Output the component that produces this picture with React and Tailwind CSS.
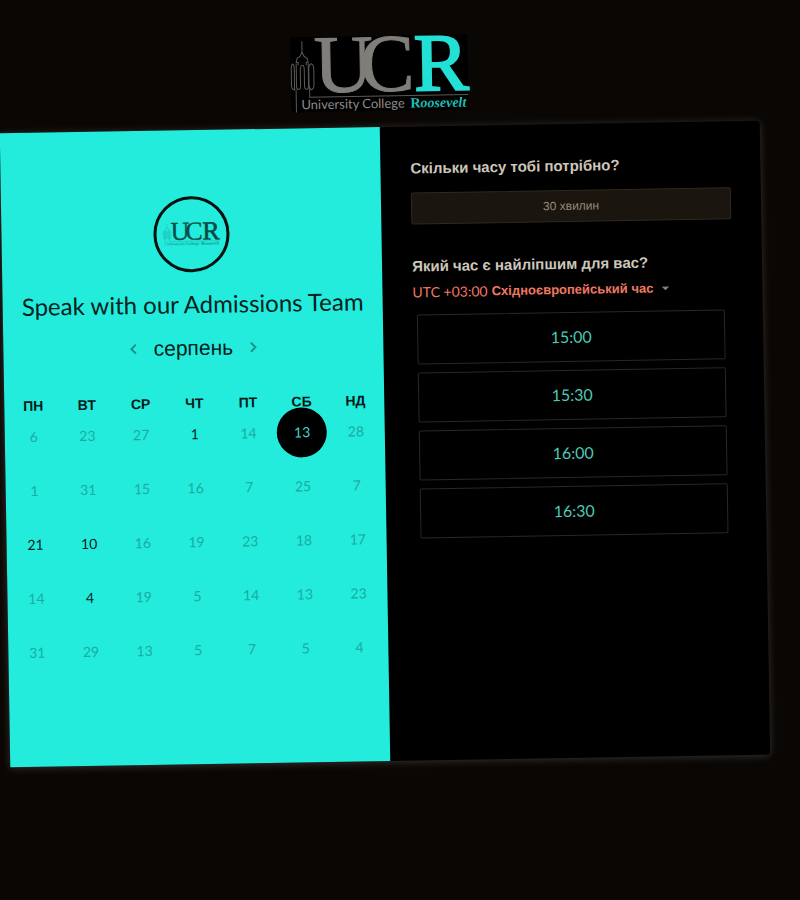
import React, { useState } from "react";

const WEEKDAYS = ["ПН", "ВТ", "СР", "ЧТ", "ПТ", "СБ", "НД"];

const WEEKS = [
  [6, 23, 27, 1, 14, 13, 28],
  [1, 31, 15, 16, 7, 25, 7],
  [21, 10, 16, 19, 23, 18, 17],
  [14, 4, 19, 5, 14, 13, 23],
  [31, 29, 13, 5, 7, 5, 4],
];

// "row-column" keys of the days that can be booked
const OPEN_DAYS = ["0-3", "0-5", "2-0", "2-1", "3-1"];

const SLOTS = ["15:00", "15:30", "16:00", "16:30"];

function Logo({ className, main, accent, line, caption, name }) {
  return (
    <svg viewBox="0 0 177 75" className={`overflow-visible ${className}`} role="img" aria-label="University College Roosevelt">
      <g fill="none" stroke={line} strokeWidth="1">
        <path d="M11.5 4v11M11.5 15l-2 4-3 2-1 4h2v3M11.500 15l2 4 3 2 1 4h-2v3" />
        <path d="M2 26.500q-1.500 1-1.500 4V48q0 4 3 4.500V31q0-4-1.500-4.500zM5.500 26v23q0 3 2 3t2-3V33q0-5 2-5t2 5v16q0 3 2 3t2-3V26" />
        <path d="M20.500 26.500q2.500 1 2.500 5V48q0 3.500-2.500 4.500-2.500-1-2.500-4.500V31q0-3.500 2.500-4.500z" />
        <path d="M5 52v23M18.500 51v9H177" />
      </g>
      <g className="font-['Liberation_Serif',serif]" fontSize="82">
        <text x="23" y="55" fill={main} stroke={main} strokeWidth="1">U</text>
        <text x="69" y="55" fill={main} stroke={main} strokeWidth="1">C</text>
        <text x="123" y="55" fill={accent} stroke={accent} strokeWidth="2">R</text>
      </g>
      <text x="10" y="72" fill={caption} fontSize="13" className="font-[Lato,sans-serif]">
        University College
      </text>
      <text x="119" y="72" fill={name} fontSize="14" className="font-['Liberation_Serif',serif] font-bold">
        R<tspan className="italic">oosevelt</tspan>
      </text>
    </svg>
  );
}

function Chevron({ flip }) {
  return (
    <svg viewBox="0 0 8 12" className="h-3 w-2" fill="none" stroke="#16948b" strokeWidth="2">
      <path d={flip ? "M1.500 1.500L6 6l-4.500 4.500" : "M6.500 1.500L2 6l4.500 4.500"} />
    </svg>
  );
}

function Calendar() {
  const [selected, setSelected] = useState("0-5");
  const dayClass = (key) => {
    if (key === selected) return "bg-black text-[#3fd6c8]";
    if (OPEN_DAYS.includes(key)) return "text-[#04211f]";
    return "text-[#1aaba1]";
  };
  return (
    <table className="w-full table-fixed border-collapse">
      <thead>
        <tr>
          {WEEKDAYS.map((d) => (
            <th key={d} scope="col" className="h-2 p-0 text-center text-sm leading-2 font-bold text-[#041a18]">
              {d}
            </th>
          ))}
        </tr>
      </thead>
      <tbody>
        {WEEKS.map((week, r) => (
          <tr key={r} className="h-[54px]">
            {week.map((day, c) => {
              const key = `${r}-${c}`;
              return (
                <td key={key} className="p-0">
                  <button
                    type="button"
                    disabled={!OPEN_DAYS.includes(key)}
                    onClick={() => setSelected(key)}
                    className={`mx-auto flex size-[50px] items-center justify-center rounded-full font-[Lato,sans-serif] text-sm ${dayClass(key)}`}
                  >
                    {day}
                  </button>
                </td>
              );
            })}
          </tr>
        ))}
      </tbody>
    </table>
  );
}

export default function App() {
  return (
    <div className="min-h-screen overflow-hidden bg-[#0a0603] font-['Liberation_Sans',Arial,sans-serif]">
      <div className="mr-[35px] ml-[5px] -rotate-[0.95deg] pt-9 pb-32">
        <header className="mb-4 flex justify-center">
          <Logo
            className="h-[75px] w-[177px] bg-black"
            main="#807e7a"
            accent="#23e0d6"
            line="#5c5a56"
            caption="#8f8c87"
            name="#1fbdb4"
          />
        </header>

        <main className="grid min-h-[634px] grid-cols-2 rounded-r bg-black shadow-[0_1px_8px_rgba(255,255,255,0.18)]">
          <section className="bg-[#23ecdd] px-0.5 pt-[66px]">
            <div className="mx-auto flex size-[76px] items-center justify-center rounded-full border-3 border-[#03100f]">
              <Logo
                className="w-[56px]"
                main="#0a4b47"
                accent="#0a4b47"
                line="#15968d"
                caption="#118a82"
                name="#118a82"
              />
            </div>
            <h1 className="mt-4 text-center font-[Lato,sans-serif] text-2xl leading-8 text-[#042220]">
              Speak with our Admissions Team
            </h1>
            <div className="mt-3 flex items-center justify-center gap-4">
              <button type="button" aria-label="Попередній місяць">
                <Chevron />
              </button>
              <h2 className="text-[21px] leading-8 text-[#042220]">серпень</h2>
              <button type="button" aria-label="Наступний місяць">
                <Chevron flip />
              </button>
            </div>
            <div className="mt-[35px]">
              <Calendar />
            </div>
          </section>

          <section className="px-[30px] pt-[30px] text-[#cdc6bb]">
            <h2 className="text-[15px] leading-6 font-bold">Скільки часу тобі потрібно?</h2>
            <button
              type="button"
              className="mt-3 block h-8 w-full rounded-xs border border-[#30291f] bg-[#1a150f] text-xs text-[#968b7b]"
            >
              30 хвилин
            </button>
            <h2 className="mt-[30px] text-[15px] leading-6 font-bold">Який час є найліпшим для вас?</h2>
            <div className="mt-1 flex h-5 items-center gap-1 text-[#ee7862]">
              <label htmlFor="timezone" className="font-[Lato,sans-serif] text-sm">
                UTC +03:00
              </label>
              <select
                id="timezone"
                className="field-sizing-content appearance-none bg-transparent pr-1 text-[13px] font-bold"
                defaultValue="eet"
              >
                <option value="eet">Східноєвропейський час</option>
              </select>
              <svg viewBox="0 0 8 4" className="pointer-events-none h-1 w-2" fill="#8a8072">
                <path d="M0 0h8L4 4z" />
              </svg>
            </div>
            <ul className="mt-3 mr-2 ml-1 flex flex-col gap-2">
              {SLOTS.map((slot) => (
                <li key={slot}>
                  <button
                    type="button"
                    className="h-[50px] w-full rounded-xs border border-[#2b2721] font-[Lato,sans-serif] text-base text-[#4cc9b8]"
                  >
                    {slot}
                  </button>
                </li>
              ))}
            </ul>
          </section>
        </main>
      </div>
    </div>
  );
}
